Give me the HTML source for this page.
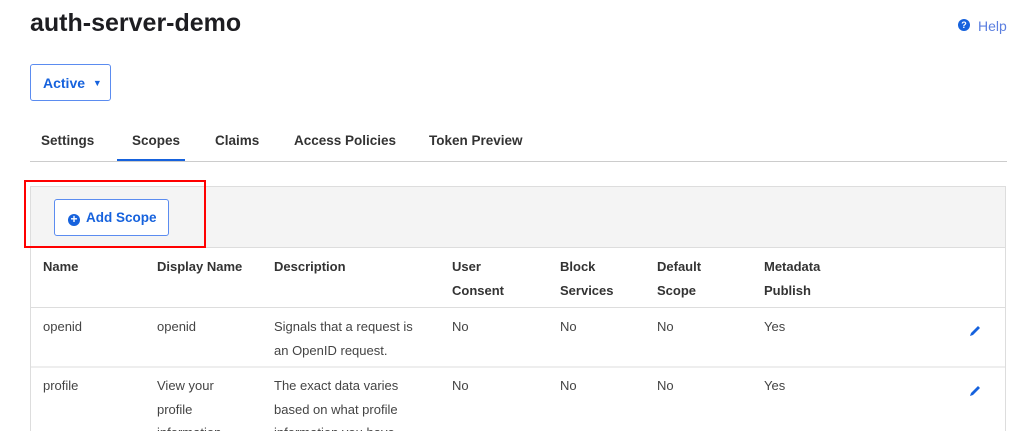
<!DOCTYPE html><html style="width:1026px;height:431px;overflow:hidden"><head><style>
body{margin:0;width:1026px;height:431px;overflow:hidden;background:#fff;font-family:"Liberation Sans",sans-serif;color:#1d1d21;position:relative}
.a{position:absolute;white-space:nowrap}
h1{position:absolute;left:30px;top:9px;margin:0;font-size:25px;font-weight:bold;color:#1d1d21}
.btn{position:absolute;border:1px solid #5b8cf0;border-radius:3px;color:#1662dd;font-weight:bold;font-size:14px;background:#fff;box-sizing:border-box}
.tab{position:absolute;top:133px;font-size:13.5px;font-weight:bold;color:#333}
.t{position:absolute;font-size:13px;color:#444;line-height:23.5px}
.h{font-weight:bold;color:#333}
</style></head><body>
<h1>auth-server-demo</h1>
<div class="a" style="left:958px;top:19px;width:12px;height:12px;border-radius:50%;background:#1662dd;color:#fff;font-size:9px;font-weight:bold;text-align:center;line-height:12px">?</div>
<div class="a" style="left:978px;top:18px;font-size:14px;color:#5b7fe0">Help</div>
<div class="btn" style="left:30px;top:64px;width:81px;height:37px;padding:10px 0 0 12px">Active <span style="font-size:9px;margin-left:4px;vertical-align:2px">▼</span></div>
<div class="tab" style="left:41px">Settings</div>
<div class="tab" style="left:132px">Scopes</div>
<div class="tab" style="left:215px">Claims</div>
<div class="tab" style="left:294px">Access Policies</div>
<div class="tab" style="left:429px">Token Preview</div>
<div class="a" style="left:30px;top:161px;width:977px;height:1px;background:#ccc"></div>
<div class="a" style="left:117px;top:159px;width:68px;height:2px;background:#1662dd"></div>
<div class="a" style="left:30px;top:186px;width:976px;height:260px;border:1px solid #ddd;box-sizing:border-box"></div>
<div class="a" style="left:31px;top:187px;width:974px;height:60px;background:#f4f4f4;border-bottom:1px solid #ddd"></div>
<div class="btn" style="left:54px;top:199px;width:115px;height:37px;padding:10px 0 0 13px;font-size:13.5px"><span style="display:inline-block;width:12px;height:12px;border-radius:50%;background:#1662dd;color:#fff;font-size:12px;line-height:11px;text-align:center;vertical-align:-1px;margin-right:6px">+</span>Add Scope</div>
<div class="a" style="left:24px;top:180px;width:178px;height:64px;border:2px solid #f00"></div>
<div class="a" style="left:31px;top:307px;width:974px;height:1px;background:#ddd"></div>
<div class="a" style="left:31px;top:366px;width:974px;height:2px;background:#eee"></div>
<div class="t h" style="left:43px;top:255px">Name</div>
<div class="t h" style="left:157px;top:255px">Display Name</div>
<div class="t h" style="left:274px;top:255px">Description</div>
<div class="t h" style="left:452px;top:255px">User<br>Consent</div>
<div class="t h" style="left:560px;top:255px">Block<br>Services</div>
<div class="t h" style="left:657px;top:255px">Default<br>Scope</div>
<div class="t h" style="left:764px;top:255px">Metadata<br>Publish</div>
<div class="t" style="left:43px;top:315px">openid</div>
<div class="t" style="left:157px;top:315px">openid</div>
<div class="t" style="left:274px;top:315px">Signals that a request is<br>an OpenID request.</div>
<div class="t" style="left:452px;top:315px">No</div>
<div class="t" style="left:560px;top:315px">No</div>
<div class="t" style="left:657px;top:315px">No</div>
<div class="t" style="left:764px;top:315px">Yes</div>
<div class="t" style="left:43px;top:374px">profile</div>
<div class="t" style="left:157px;top:374px">View your<br>profile<br>information</div>
<div class="t" style="left:274px;top:374px">The exact data varies<br>based on what profile<br>information you have</div>
<div class="t" style="left:452px;top:374px">No</div>
<div class="t" style="left:560px;top:374px">No</div>
<div class="t" style="left:657px;top:374px">No</div>
<div class="t" style="left:764px;top:374px">Yes</div>
<svg class="a" style="left:968px;top:324px" width="14" height="14"><path d="M2 12 L3 9 L10 2 L12 4 L5 11 Z" fill="#1662dd"/></svg>
<svg class="a" style="left:968px;top:384px" width="14" height="14"><path d="M2 12 L3 9 L10 2 L12 4 L5 11 Z" fill="#1662dd"/></svg>
</body></html>
